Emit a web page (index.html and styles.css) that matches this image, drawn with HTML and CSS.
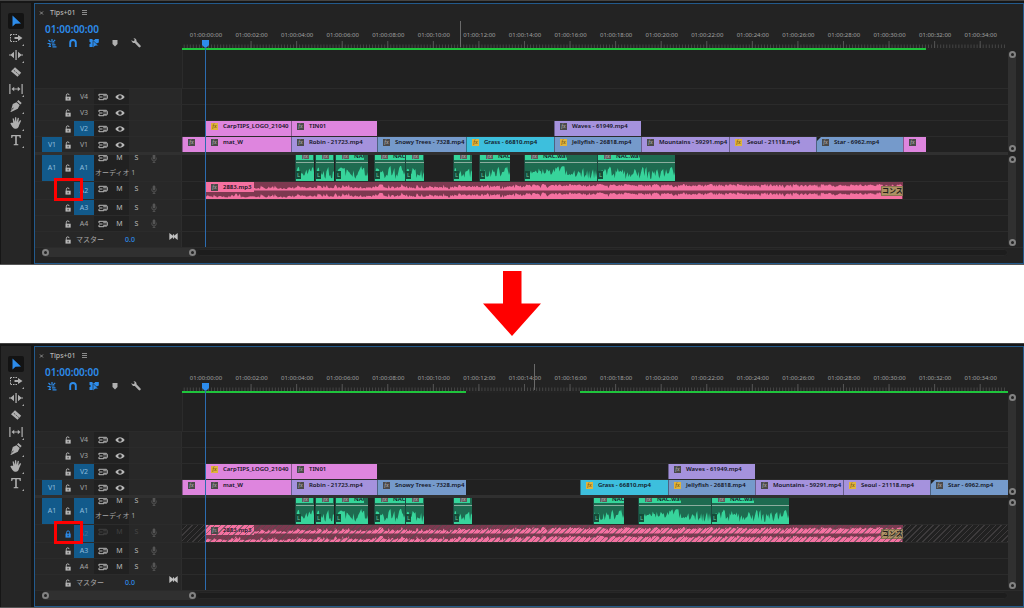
FILE: index.html
```html
<!DOCTYPE html>
<html lang="ja">
<head>
<meta charset="utf-8">
<title>Tips+01 timeline</title>
<link rel="stylesheet" href="styles.css">
</head>
<body>
<svg class="sprite" aria-hidden="true">
  <symbol id="i-select" viewBox="0 0 14 14"><path d="M3.500 1.500v11l3-2.700 5.500-.3z"/></symbol>
  <symbol id="i-track" viewBox="0 0 14 14"><path d="M1.500 3.500h7M1.500 10.500h7M1.500 3.500v7" fill="none" stroke="currentColor" stroke-dasharray="1.500 1"/><path d="M5.500 6H9V4l4.500 3L9 10V8H5.500z"/></symbol>
  <symbol id="i-ripple" viewBox="0 0 14 14"><path d="M6.400 2h1.300v10H6.400zM5 3.800v6.400L1.800 7.500H0v-1h1.800zM9 3.800v6.400l3.200-2.700H14v-1h-1.800z"/></symbol>
  <symbol id="i-razor" viewBox="0 0 14 14"><path d="M6 2.200l6.200 5.600-3.700 4L2 6.300z"/><path d="M4.800 5.200l5 4.400" stroke="#262626" stroke-width=".8" stroke-dasharray="1.500 1"/></symbol>
  <symbol id="i-slip" viewBox="0 0 14 14"><path d="M.3 2h1.200v10H.3zM12.500 2h1.200v10h-1.200zM2.500 7l2.700-2.300v1.800h3.600V4.700L11.500 7 8.800 9.300V7.500H5.200v1.800z"/></symbol>
  <symbol id="i-pen" viewBox="0 0 14 14"><path d="M9.300 1l3.400 3-1.300 1.500L8 2.500zM7.500 3.200l3.200 2.900-1.900 3.700L2 13l-.6-.6L4.700 9l-.6-.6L2 11.600 3.800 5z"/></symbol>
  <symbol id="i-hand" viewBox="0 0 14 14"><path d="M4.200 6.800L3.600 2.600l1-.3 1.200 3.500.2-4.600h1.200l.4 4.600 1.200-4 1.100.3-.6 4.600 1.800-2.600 1 .6-2 4.600c-.5 2-1.300 3.500-3.300 3.500-2.300 0-3.200-1.400-5.500-5.300l.8-.7z"/></symbol>
  <symbol id="i-type" viewBox="0 0 14 14"><path d="M2.200 2h9.600v3h-1l-.5-1.700H7.800v7.600l1.500.4v.9H4.700v-.9l1.500-.4V3.300H3.700L3.200 5h-1z"/></symbol>
  <symbol id="i-nest" viewBox="0 0 10 10"><path d="M.5 5.500h3M5 1v3M1.500 2l2 2M8.200 1.800l-2 2M1.500 8.500h2.500M4.500 5h3M5 6.800h3.500M5.500 8.800h4M4 6.700l-2 .5" stroke="currentColor" stroke-width="1.200" fill="none"/></symbol>
  <symbol id="i-magnet" viewBox="0 0 10 10"><path d="M2.200 9V4.800a2.800 2.800 0 015.600 0V9" stroke="currentColor" stroke-width="1.900" fill="none"/></symbol>
  <symbol id="i-link" viewBox="0 0 10 10"><path d="M.5 1h3v1h2.300V1h4v3.500L4.500 7 4 9H.5V6h1V4h-1z"/><path d="M4 2.500V10l2-2 3.500-.3z" stroke="#232323" stroke-width=".6"/></symbol>
  <symbol id="i-marker" viewBox="0 0 10 10"><path d="M2.500 2h5v4L5 8.500 2.500 6z"/></symbol>
  <symbol id="i-wrench" viewBox="0 0 10 10"><path d="M.6 1.900L2 3.200l1.300-.4.3-1.400L2.400.3C4.200-.2 5.800 1.200 5.500 3.200l4 4.300c.8 1.200-.7 2.500-1.800 1.600L3.800 5C2 5.300.2 4 .6 1.900z"/></symbol>
  <symbol id="i-open" viewBox="0 0 8 8"><path d="M1.500 3.700h5.200v3.900H1.500z"/><path d="M2.300 3.800V2.500a1.400 1.400 0 012.800-.4" fill="none" stroke="currentColor"/><path d="M4.100 4.800v1.600" stroke="#262626" stroke-width=".9"/></symbol>
  <symbol id="i-locked" viewBox="0 0 8 8"><path d="M1.500 3.600h5.200v4H1.500z"/><path d="M2.600 4V2.400a1.500 1.500 0 013 0V4" fill="none" stroke="currentColor"/><path d="M4.100 4.700v1.600" stroke="#262626" stroke-width=".9"/></symbol>
  <symbol id="i-sync" viewBox="0 0 10 8"><path d="M1 1.300h5M1 6.700h5M1 4h3.500M1 1v2M1 5v2M5.200 2.800h3.600M5.200 5.200h3.600M6 1.300h2.500l.8 1v3.200l-.8.600H5.500" fill="none" stroke="currentColor"/></symbol>
  <symbol id="i-eye" viewBox="0 0 10 8"><path d="M.3 4c2.500-3.600 6.900-3.600 9.400 0-2.500 3.600-6.900 3.600-9.400 0z"/><circle cx="5" cy="4" r="1.800" fill="#242424"/></symbol>
  <symbol id="i-mic" viewBox="0 0 8 10"><rect x="2.500" y=".5" width="3" height="5.500" rx="1.500"/><path d="M1.500 4v1.200a2.500 2.500 0 005 0V4M4 7.700V9.500M2.500 9.500h3" fill="none" stroke="currentColor"/></symbol>
  <symbol id="i-bow" viewBox="0 0 8 8"><path d="M.3.800L3.500 3.300V2h1v1.300L7.700.8v6.400L4.500 4.700V6h-1V4.700L.3 7.200z"/></symbol>
  <symbol id="i-menu" viewBox="0 0 5 6"><path d="M0 .5h5M0 2.500h5M0 4.500h5" stroke="currentColor" stroke-width="1"/></symbol>
  <symbol id="i-close" viewBox="0 0 5 6"><path d="M1 1.500l3 3M4 1.500l-3 3" stroke="currentColor"/></symbol>
</svg>
<main class="page">
  <section class="shot" id="before" aria-label="Track unlocked"></section>
  <div class="between">
    <svg class="arrow" viewBox="0 0 58 65" role="img" aria-label="Next"><path d="M20 0h18.500v32.500H58L29 65 0 32.500h20z"/></svg>
  </div>
  <section class="shot" id="after" aria-label="Track locked"></section>
</main>
<script src="timeline.js"></script>
</body>
</html>
```

FILE: styles.css
```css
* { box-sizing: border-box; }
body { margin: 0; background: #fff; color: #a5a5a5; font: 7px/10px "Noto Sans", "Noto Sans CJK JP", sans-serif; }
button { margin: 0; padding: 0; border: 0; background: none; color: inherit; font: inherit; display: grid; place-items: center; }
svg { display: block; fill: currentColor; }
.sprite { position: absolute; width: 0; height: 0; }

.shot { display: flex; gap: 3px; padding: 2px 0 0 1px; background: #161616; border-top: 1px solid #444; border-bottom: 1px solid #555; }
.between { display: flex; justify-content: center; padding: 6px 0 7px; }
.arrow { width: 58px; height: 65px; color: #f00; }

.tools { display: flex; flex-direction: column; gap: 1px; width: 30px; padding: 10px 0 0 7px; background: #262626; color: #b0b0b0; }
.tool { position: relative; width: 16px; height: 16px; }
.tool svg { width: 14px; height: 14px; }
.tool.active { background: #131313; color: #2d8ceb; border-radius: 2px; }
.tool.more::after { content: ""; position: absolute; right: 0; bottom: 0; border: 1px solid; border-color: transparent #aaa #aaa transparent; }

.panel { flex: 1; min-width: 0; border: 1px solid #235a8c; background: #232323; padding-bottom: 6px; }
.stage { position: relative; }
.row { display: grid; grid-template-columns: 147px 1fr 15px; }
.head { height: 84px; }
.tab { display: flex; align-items: center; gap: 6px; height: 17px; padding-left: 4px; color: #b5b5b5; font-weight: 500; }
.tab svg { width: 5px; height: 6px; color: #8c8c8c; }
.timecode { height: 16px; padding-left: 10px; color: #2d8ceb; font-size: 10px; font-weight: 600; line-height: 17px; }
.options { display: flex; gap: 11px; height: 12px; padding-left: 12px; align-items: center; color: #b0b0b0; }
.options svg { width: 10px; height: 10px; }
.options .on { color: #2d8ceb; }

.ruler { position: relative; height: 46px; }
.ruler .label { position: absolute; top: 27px; width: 40px; margin-left: -20px; text-align: center; font-size: 6px; line-height: 9px; color: #a0a0a0; }
.ticks { position: absolute; left: 0; bottom: 2px; width: 100%; height: 7px; }
.rendered { position: absolute; bottom: 0; height: 2px; background: #1fc43c; }
.hover { position: absolute; top: 17px; bottom: 3px; width: 1px; background: #6a6a6a; }
.bed { height: 38px; border-left: 1px solid #2b2b2b; background: #212121; }

.overlay { position: absolute; top: 0; bottom: 10px; left: 147px; right: 15px; pointer-events: none; }
.playhead { position: absolute; top: 36px; bottom: 0; width: 7px; margin-left: -3px; display: flex; flex-direction: column; align-items: center; }
.playhead::after { content: ""; flex: 1; width: 1px; background: #2c6cb0; }
.playhead svg { width: 7px; height: 8px; color: #2d8ceb; }

.tracks { display: grid; grid-template-columns: 1fr 15px; }
.track { display: grid; grid-template-columns: 147px 1fr; height: 16px; border-top: 1px solid #2b2b2b; background: #212121; }
.track.a1 { height: 26px; border-top: 0; }
.track.a2 { height: 18px; }
.split { height: 3px; background: #303030; }
.control { display: grid; grid-template-columns: 7px 20px 12px 20px 1fr; height: 100%; background: #272727; border-right: 1px solid #2d2d2d; min-height: 0; }
.control .src { grid-column: 2; }
.control .lock { grid-column: 3; }
.control .target { grid-column: 4; }
.control .on { background: #125a8b; color: #8fbcdc; }
.lock svg { width: 8px; height: 8px; color: #b8b8b8; }
.control .locked svg { color: #2d8ceb; }
.keys { grid-column: 5; display: grid; grid-template-columns: 17px 17px 17px 17px; grid-template-rows: 100%; min-height: 0; background: linear-gradient(90deg, #212121 35px, #282828 35px); color: #b8b8b8; }
.a1 .keys { grid-template-rows: 8px 1fr; overflow: hidden; }
.a1 .keys button { height: 10px; align-self: end; }
.a2 .keys { padding-bottom: 3px; }
.track-name { grid-column: 1 / -1; align-self: start; padding: 5px 0 0 1px; color: #a5a5a5; white-space: nowrap; }
.keys .sync, .keys .eye { width: 10px; height: 8px; }
.keys .mic { width: 8px; height: 9px; color: #555; }
.dim { opacity: .2; }
.control .off { color: #3f7299; }
.lane { position: relative; overflow: hidden; min-height: 0; }
.hatched::after { content: ""; position: absolute; inset: 0; background: repeating-linear-gradient(135deg, transparent 0 3px, rgba(80, 76, 78, .6) 3px 4px); }

.clip { position: absolute; top: 0; bottom: 0; display: flex; gap: 5px; padding-left: 5px; overflow: hidden; white-space: nowrap; color: #12121c; border-left: 1px solid rgba(30, 30, 40, .45); font-size: 6px; font-weight: 600; line-height: 10px; }
.fx { flex: none; display: block; width: 7px; height: 7px; margin-top: 2px; background: #4a4a4a; color: #bbb; font: italic 6px/7px "Liberation Serif", serif; text-align: center; }
.fx.gold { background: #e0b33c; color: #5e4309; }
.pink { background: #de85de; }
.violet { background: #a592dd; }
.blue { background: #759acb; }
.cyan { background: #3dbfdd; }
.cut::before { content: ""; position: absolute; left: 0; top: 0; border: 2px solid; border-color: #222 transparent transparent #222; }

.audio { display: block; padding: 0; background: #1e6b50; }
.audio .bar { position: absolute; left: 0; top: 0; height: 5px; display: flex; gap: 5px; overflow: hidden; padding-left: 6px; background: #35d59a; line-height: 2px; }
.audio .bar .fx { height: 4px; margin: 0; line-height: 2px; background: #5d5d5d; }
.audio .level { position: absolute; left: 0; right: 0; top: 7px; height: 1px; background: #8dad9f; }
.audio .wave { position: absolute; left: 0; bottom: 0; width: 100%; height: 17px; color: #37d49b; }
.audio .chan { position: absolute; left: 0; bottom: 2px; width: 5px; height: 8px; background: #164c39; color: #6fc7a4; font-weight: 400; line-height: 8px; text-align: center; }
.music { display: block; padding: 0; background: #7d3950; }
.music .wave { position: absolute; left: 0; top: 0; width: 100%; height: 100%; color: #f571a1; }
.music .name { position: absolute; left: 0; top: 0; display: flex; gap: 5px; width: 48px; height: 10px; padding-left: 5px; background: #f571a1; }
.fade { position: absolute; right: 0; top: 4px; width: 22px; height: 10px; overflow: hidden; background: #ad9163; border: 1px solid #8a7351; color: #22201c; font-size: 7px; line-height: 8px; }

.vscroll { display: flex; flex-direction: column; gap: 4px; width: 8px; margin-top: -37px; padding-bottom: 1px; }
.thumb { display: flex; flex-direction: column; justify-content: space-between; align-items: center; background: #303030; border-radius: 4px; }
.thumb.video { height: 101px; }
.thumb.sound { flex: 1; }
.ring { width: 7px; height: 7px; border: 2px solid #828282; border-radius: 50%; background: #232323; }
.master { display: flex; align-items: center; grid-column: 4 / -1; padding-left: 2px; }
.master .name { width: 49px; }
.master .db { color: #2d8ceb; width: 44px; font-weight: 500; }
.master svg { width: 9px; height: 9px; margin-bottom: 6px; color: #c0c0c0; }
.hscroll { display: flex; height: 10px; padding: 0 15px 0 7px; border-top: 1px solid #2b2b2b; background: #232323; }
.hthumb { display: flex; flex: none; width: 154px; justify-content: space-between; align-items: center; background: #303030; border-radius: 4px; }
.htrack { flex: 1; margin: 1px 0; background: #1d1d1d; border: 1px solid #272727; border-radius: 4px; }
.focus { position: absolute; left: 19px; top: 174px; width: 29px; height: 23px; border: 3px solid #f00; pointer-events: none; }
```

FILE: timeline.js
```js
const SPAN = 826;
const ORIGIN = 182;
const pct = n => (n / SPAN * 100).toFixed(3) + '%';
const place = (a, b) => `style="left:${pct(a - ORIGIN)};width:${pct(b - a)}"`;
const icon = (id, cls = '') => `<svg class="${cls}" aria-hidden="true"><use href="#i-${id}"/></svg>`;

function noise(seed) {
  let s = seed;
  return () => (s = (s * 16807) % 2147483647) / 2147483647;
}

// Speech: narrow peaks with pauses between the words.
function speech(width, seed) {
  const r = noise(seed);
  let d = 'M0 17', h = 9;
  for (let x = 0; x < width; x++) {
    h = r() < 0.25 ? 2 + r() * 5 : Math.min(15, h * 0.4 + 3 + r() * 7);
    d += `L${x} ${(17 - h).toFixed(1)}`;
  }
  return `<svg class="wave" viewBox="0 0 ${width} 17" preserveAspectRatio="none"><path d="${d}L${width} 8V17z"/></svg>`;
}

// Music: two channels that grow denser after the intro.
function music(width) {
  let out = '';
  for (const [base, seed] of [[8.5, 771], [17, 771]]) {
    const r = noise(seed);
    let d = `M0 ${base}`;
    for (let x = 0; x < width; x++) {
      const gain = x < 90 ? 2.2 : x < 240 ? 3 : x < 320 ? 4 : 5.2;
      const beat = x % 28 < 4 ? 1 : 0;
      const h = Math.min(6.5, gain + beat + (r() - 0.5) * 2 + (r() > 0.86 ? (x < 240 ? 2.5 : -2) : 0));
      d += `L${x} ${(base - h).toFixed(1)}`;
    }
    out += `<path d="${d}V${base}z"/>`;
  }
  return `<svg class="wave" viewBox="0 0 ${width} 17" preserveAspectRatio="none">${out}</svg>`;
}

const clip = ([a, b, color, name, gold, cut]) =>
  `<div class="clip ${color}${cut ? ' cut' : ''}" ${place(a, b)}><span class="fx${gold ? ' gold' : ''}">fx</span><span>${name}</span></div>`;

const voice = ([a, b, bar, name], i) =>
  `<div class="clip audio" ${place(a, b)}><div class="bar" style="width:${bar}px"><span class="fx">fx</span><span>${name}</span></div>
  <div class="level"></div>${speech(b - a, 91 + i * 7919)}<span class="chan">L</span></div>`;

function track(id, { src, on, audio, locked, content = '' }) {
  const keys = audio
    ? `<button aria-label="Sync lock" class="${locked ? 'dim' : ''}">${icon('sync', 'sync')}</button><button class="${locked ? 'dim' : ''}">M</button><button class="${locked ? 'dim' : ''}">S</button><button aria-label="Voice-over">${icon('mic', 'mic')}</button>${id === 'A1' ? '<span class="track-name">オーディオ 1</span>' : ''}`
    : `<button aria-label="Sync lock">${icon('sync', 'sync')}</button><button aria-label="Show track">${icon('eye', 'eye')}</button>`;
  return `<div class="track ${id.toLowerCase()}"><div class="control">
    ${src ? `<button class="src on">${id === 'V1' ? 'V1' : 'A1'}</button>` : ''}
    <button class="lock${locked ? ' locked' : ''}" aria-label="Lock ${id}">${icon(locked ? 'locked' : 'open')}</button>
    <button class="target${on ? ' on' : ''}${locked ? ' off' : ''}">${id}</button>
    <div class="keys">${keys}</div></div>
    <div class="lane${locked ? ' hatched' : ''}">${content}</div></div>`;
}

function ruler(hover, rendered) {
  let labels = '', minor = '', major = '';
  for (let i = 0; i < 18; i++) {
    const x = 23.5 + i * 45.57;
    labels += `<span class="label" style="left:${pct(x + 0.5)}">01:00:${String(i * 2).padStart(2, '0')}:00</span>`;
    major += `M${x} 0V7`;
  }
  for (let x = 2.2; x < 823; x += 3.038) minor += `M${x.toFixed(2)} 3.500V7`;
  return `<div class="ruler">${labels}
    <svg class="ticks" viewBox="0 0 826 7" preserveAspectRatio="none"><path d="${minor}" stroke="#454545"/><path d="${major}" stroke="#555"/></svg>
    ${rendered.map(([a, b]) => `<div class="rendered" ${place(a, b)}></div>`).join('')}
    <div class="hover" style="left:${pct(hover - ORIGIN)}"></div></div>`;
}

const tools = ['select', 'track', 'ripple', 'razor', 'slip', 'pen', 'hand', 'type'];

function render(id, { shift, locked, hover, rendered }) {
  const s = shift;
  const v2 = [[205, 291, 'pink', 'CarpTIPS_LOGO_21040', 1], [291, 377, 'pink', 'TIN01'], [554 + s, 641 + s, 'violet', 'Waves - 61949.mp4']];
  const v1 = [[182, 205, 'pink', ''], [205, 291, 'pink', 'mat_W'], [291, 377, 'violet', 'Robin - 21723.mp4'],
    [377, 466, 'blue', 'Snowy Trees - 7328.mp4'], [466 + s, 554 + s, 'cyan', 'Grass - 66810.mp4', 1], [554 + s, 641 + s, 'blue', 'Jellyfish - 26818.mp4', 1],
    [641 + s, 729 + s, 'violet', 'Mountains - 59291.mp4'], [729 + s, 816 + s, 'violet', 'Seoul - 21118.mp4', 1],
    [816 + s, 903 + s, 'blue', 'Star - 6962.mp4', 0, 1], [903 + s, 926 + s, 'pink', '']];
  const a1 = [[295, 314, 17, ''], [315, 334, 17, ''], [335, 368, 28, 'NAC'], [374, 405, 30, 'NAC'], [405, 424, 17, ''], [453, 472, 16, ''],
    [479 + s, 510 + s, 30, 'NAC'], [524 + s, 597 + s, 42, 'NAC.wav'], [597 + s, 675 + s, 42, 'NAC.wav']];
  const song = `<div class="clip music" ${place(205, 903)}>${music(698)}<div class="name"><span class="fx">fx</span><span>2883.mp3</span></div><div class="fade">コンスタント</div></div>`;
  document.getElementById(id).innerHTML = `
  <nav class="tools" aria-label="Tools">${tools.map((t, i) => `<button class="tool${i ? '' : ' active'}${i && t !== 'razor' ? ' more' : ''}" aria-label="${t}">${icon(t)}</button>`).join('')}</nav>
  <div class="panel"><div class="stage">
    <div class="row head">
      <div><div class="tab"><button aria-label="Close">${icon('close')}</button><span>Tips+01</span><button aria-label="Menu">${icon('menu')}</button></div>
      <div class="timecode">01:00:00:00</div>
      <div class="options">${['nest', 'magnet', 'link', 'marker', 'wrench'].map((t, i) => `<button class="${i < 3 ? 'on' : ''}" aria-label="${t}">${icon(t)}</button>`).join('')}</div></div>
      <div>${ruler(hover, rendered)}<div class="bed"></div></div>
    </div>
    <div class="tracks"><div>
      ${track('V4', {})}${track('V3', {})}
      ${track('V2', { on: 1, content: v2.map(clip).join('') })}
      ${track('V1', { src: 1, content: v1.map(clip).join('') })}
      <div class="split"></div>
      ${track('A1', { src: 1, on: 1, audio: 1, content: a1.map(voice).join('') })}
      ${track('A2', { on: 1, audio: 1, locked, content: song })}
      ${track('A3', { on: 1, audio: 1 })}${track('A4', { audio: 1 })}
      <div class="track"><div class="control"><button class="lock" aria-label="Lock master">${icon('open')}</button>
        <div class="master"><span class="name">マスター</span><span class="db">0.0</span>${icon('bow')}</div></div><div class="lane"></div></div>
    </div>
    <div class="vscroll"><div class="thumb video"><i class="ring"></i><i class="ring"></i></div><div class="thumb sound"><i class="ring"></i><i class="ring"></i></div></div></div>
    <div class="hscroll"><div class="hthumb"><i class="ring"></i><i class="ring"></i></div><div class="htrack"></div></div>
    <div class="overlay"><div class="playhead" style="left:${pct(23.5)}"><svg viewBox="0 0 7 8"><path d="M0 0h7v5L4.500 7.500h-2L0 5z"/></svg></div></div>
    <div class="focus"></div>
  </div></div>`;
}

render('before', { shift: 0, locked: false, hover: 460, rendered: [[182, 926]] });
render('after', { shift: 114, locked: true, hover: 534, rendered: [[182, 466], [580, 1008]] });
```
